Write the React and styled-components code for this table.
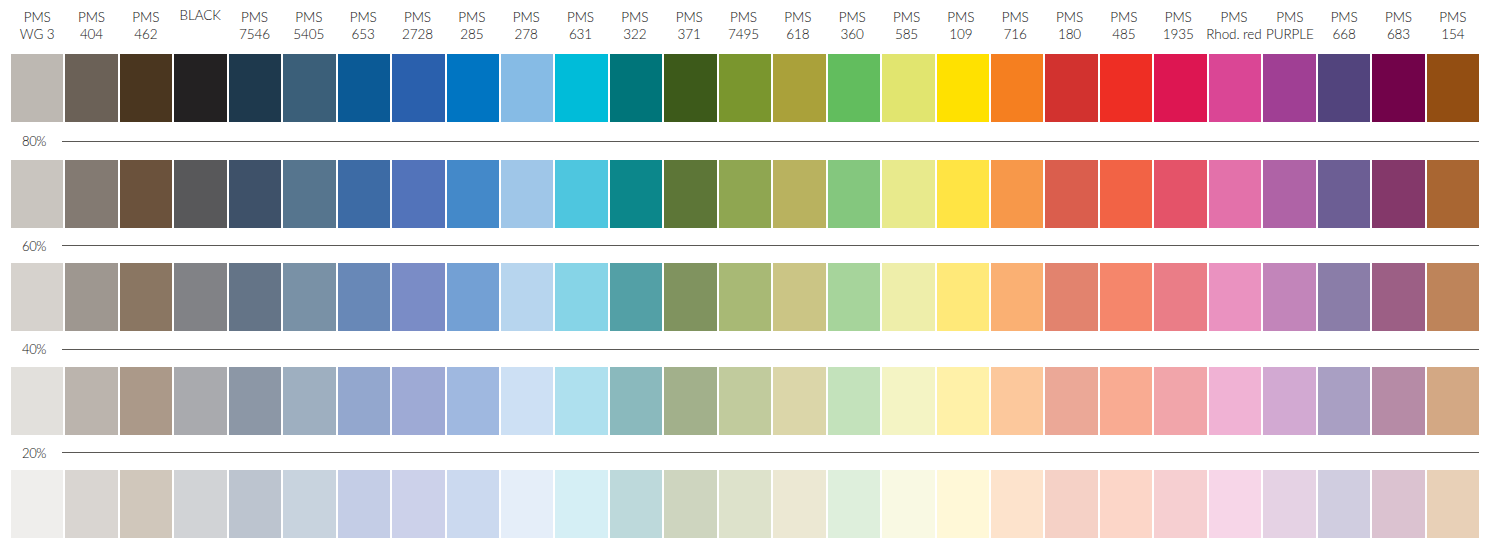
import React from "react";
import styled, { createGlobalStyle } from "styled-components";

const GlobalStyle = createGlobalStyle`
  body {
    margin: 0;
    background: #ffffff;
    font-family: "Lato", "Open Sans", "Liberation Sans", sans-serif;
  }
`;

const labels = [
  ["PMS", "WG 3"], ["PMS", "404"], ["PMS", "462"], ["BLACK", ""],
  ["PMS", "7546"], ["PMS", "5405"], ["PMS", "653"], ["PMS", "2728"],
  ["PMS", "285"], ["PMS", "278"], ["PMS", "631"], ["PMS", "322"],
  ["PMS", "371"], ["PMS", "7495"], ["PMS", "618"], ["PMS", "360"],
  ["PMS", "585"], ["PMS", "109"], ["PMS", "716"], ["PMS", "180"],
  ["PMS", "485"], ["PMS", "1935"], ["PMS", "Rhod. red"], ["PMS", "PURPLE"],
  ["PMS", "668"], ["PMS", "683"], ["PMS", "154"],
];

const tints = [
  {
    label: null,
    colors: [
      "#bdb8b2", "#6b6157", "#4a361f", "#232122", "#1e394d", "#3b5f79", "#0b5a96",
      "#2a60ad", "#0075c2", "#86bbe5", "#00bcd9", "#00757a", "#3d5a1a", "#7a962e",
      "#aaa13a", "#62bd5e", "#e1e56f", "#ffe100", "#f57f20", "#d2322f", "#ee2e24",
      "#dd1652", "#da4695", "#a03f94", "#52447d", "#72034a", "#934e12",
    ],
  },
  {
    label: "80%",
    colors: [
      "#c9c5bf", "#837a72", "#6b523c", "#58585a", "#3e5169", "#56758e", "#3d6ba5",
      "#5273ba", "#4489c9", "#9fc6e8", "#4ec6df", "#0c878b", "#5d7637", "#8fa651",
      "#b9b25f", "#84c77e", "#e8ea8c", "#ffe444", "#f7984a", "#da5e4d", "#f26345",
      "#e45369", "#e371aa", "#af63a6", "#6c5e94", "#84386a", "#a96632",
    ],
  },
  {
    label: "60%",
    colors: [
      "#d6d2cd", "#9e9790", "#8a7662", "#818286", "#647487", "#7991a6", "#6888b7",
      "#7a8cc6", "#73a0d4", "#b7d5ee", "#86d4e7", "#53a0a6", "#80935f", "#a8b975",
      "#cbc585", "#a6d49b", "#eeeeaa", "#ffe979", "#fab073", "#e2836e", "#f5866b",
      "#ea7d87", "#ea92c0", "#c285ba", "#8a7da8", "#9c5f85", "#be845a",
    ],
  },
  {
    label: "40%",
    colors: [
      "#e2e0dc", "#bbb4ad", "#ab9989", "#a9aaae", "#8c97a6", "#9eafc0", "#93a7ce",
      "#9eaad5", "#9fb8e0", "#cde0f4", "#aee0ee", "#8ab9bd", "#a2b08b", "#c1cb9d",
      "#dbd6a9", "#c3e2bb", "#f4f4c4", "#fff1a8", "#fcc89c", "#eba897", "#f9ab92",
      "#f1a5aa", "#f0b2d4", "#d2a9d2", "#a99fc3", "#b68ba6", "#d3a884",
    ],
  },
  {
    label: "20%",
    colors: [
      "#efeeec", "#d9d5d1", "#d0c7bb", "#d1d3d6", "#bcc4cf", "#c8d3de", "#c4cde6",
      "#ccd1ea", "#cbd9ef", "#e5eef9", "#d5eff5", "#bdd9db", "#ced5bf", "#dde2cb",
      "#ece8d3", "#deefdc", "#f9f9e3", "#fff8d7", "#fde3cc", "#f5d1c6", "#fcd6c8",
      "#f6cfd1", "#f7d6e8", "#e5d2e4", "#d0cde0", "#dbc2d0", "#e8d0b7",
    ],
  },
];

const Page = styled.div`
  width: 1468px;
  padding: 0 0 0 11px;
`;

const Grid = styled.div`
  display: grid;
  grid-template-columns: repeat(27, 1fr);
  column-gap: 2px;
`;

const Header = styled(Grid)`
  height: 54px;
  align-items: start;
`;

const Label = styled.div`
  padding-top: ${(p) => (p.$single ? "7px" : "9px")};
  text-align: center;
  font-size: 13.5px;
  font-weight: 300;
  line-height: 17px;
  color: #111111;
  white-space: nowrap;
  letter-spacing: -0.1px;
`;

const SwatchRow = styled(Grid)`
  height: 68px;
`;

const Swatch = styled.div`
  background: ${(p) => p.$color};
`;

const Divider = styled.div`
  display: flex;
  align-items: center;
  height: ${(p) => p.$h}px;
`;

const Percent = styled.span`
  width: 51px;
  padding-left: 11px;
  box-sizing: border-box;
  font-size: 13px;
  font-weight: 300;
  color: #111111;
  letter-spacing: -0.4px;
`;

const Rule = styled.div`
  flex: 1;
  height: 1px;
  background: #5a5855;
`;

const dividerHeights = [38, 35, 36, 35];

export default function App() {
  return (
    <>
      <GlobalStyle />
      <Page>
        <Header>
          {labels.map(([a, b], i) => (
            <Label key={i} $single={!b}>
              {a}
              {b && <br />}
              {b}
            </Label>
          ))}
        </Header>
        {tints.map((t, ri) => (
          <React.Fragment key={ri}>
            {t.label && (
              <Divider $h={dividerHeights[ri - 1]}>
                <Percent>{t.label}</Percent>
                <Rule />
              </Divider>
            )}
            <SwatchRow>
              {t.colors.map((c, i) => (
                <Swatch key={i} $color={c} />
              ))}
            </SwatchRow>
          </React.Fragment>
        ))}
      </Page>
    </>
  );
}
